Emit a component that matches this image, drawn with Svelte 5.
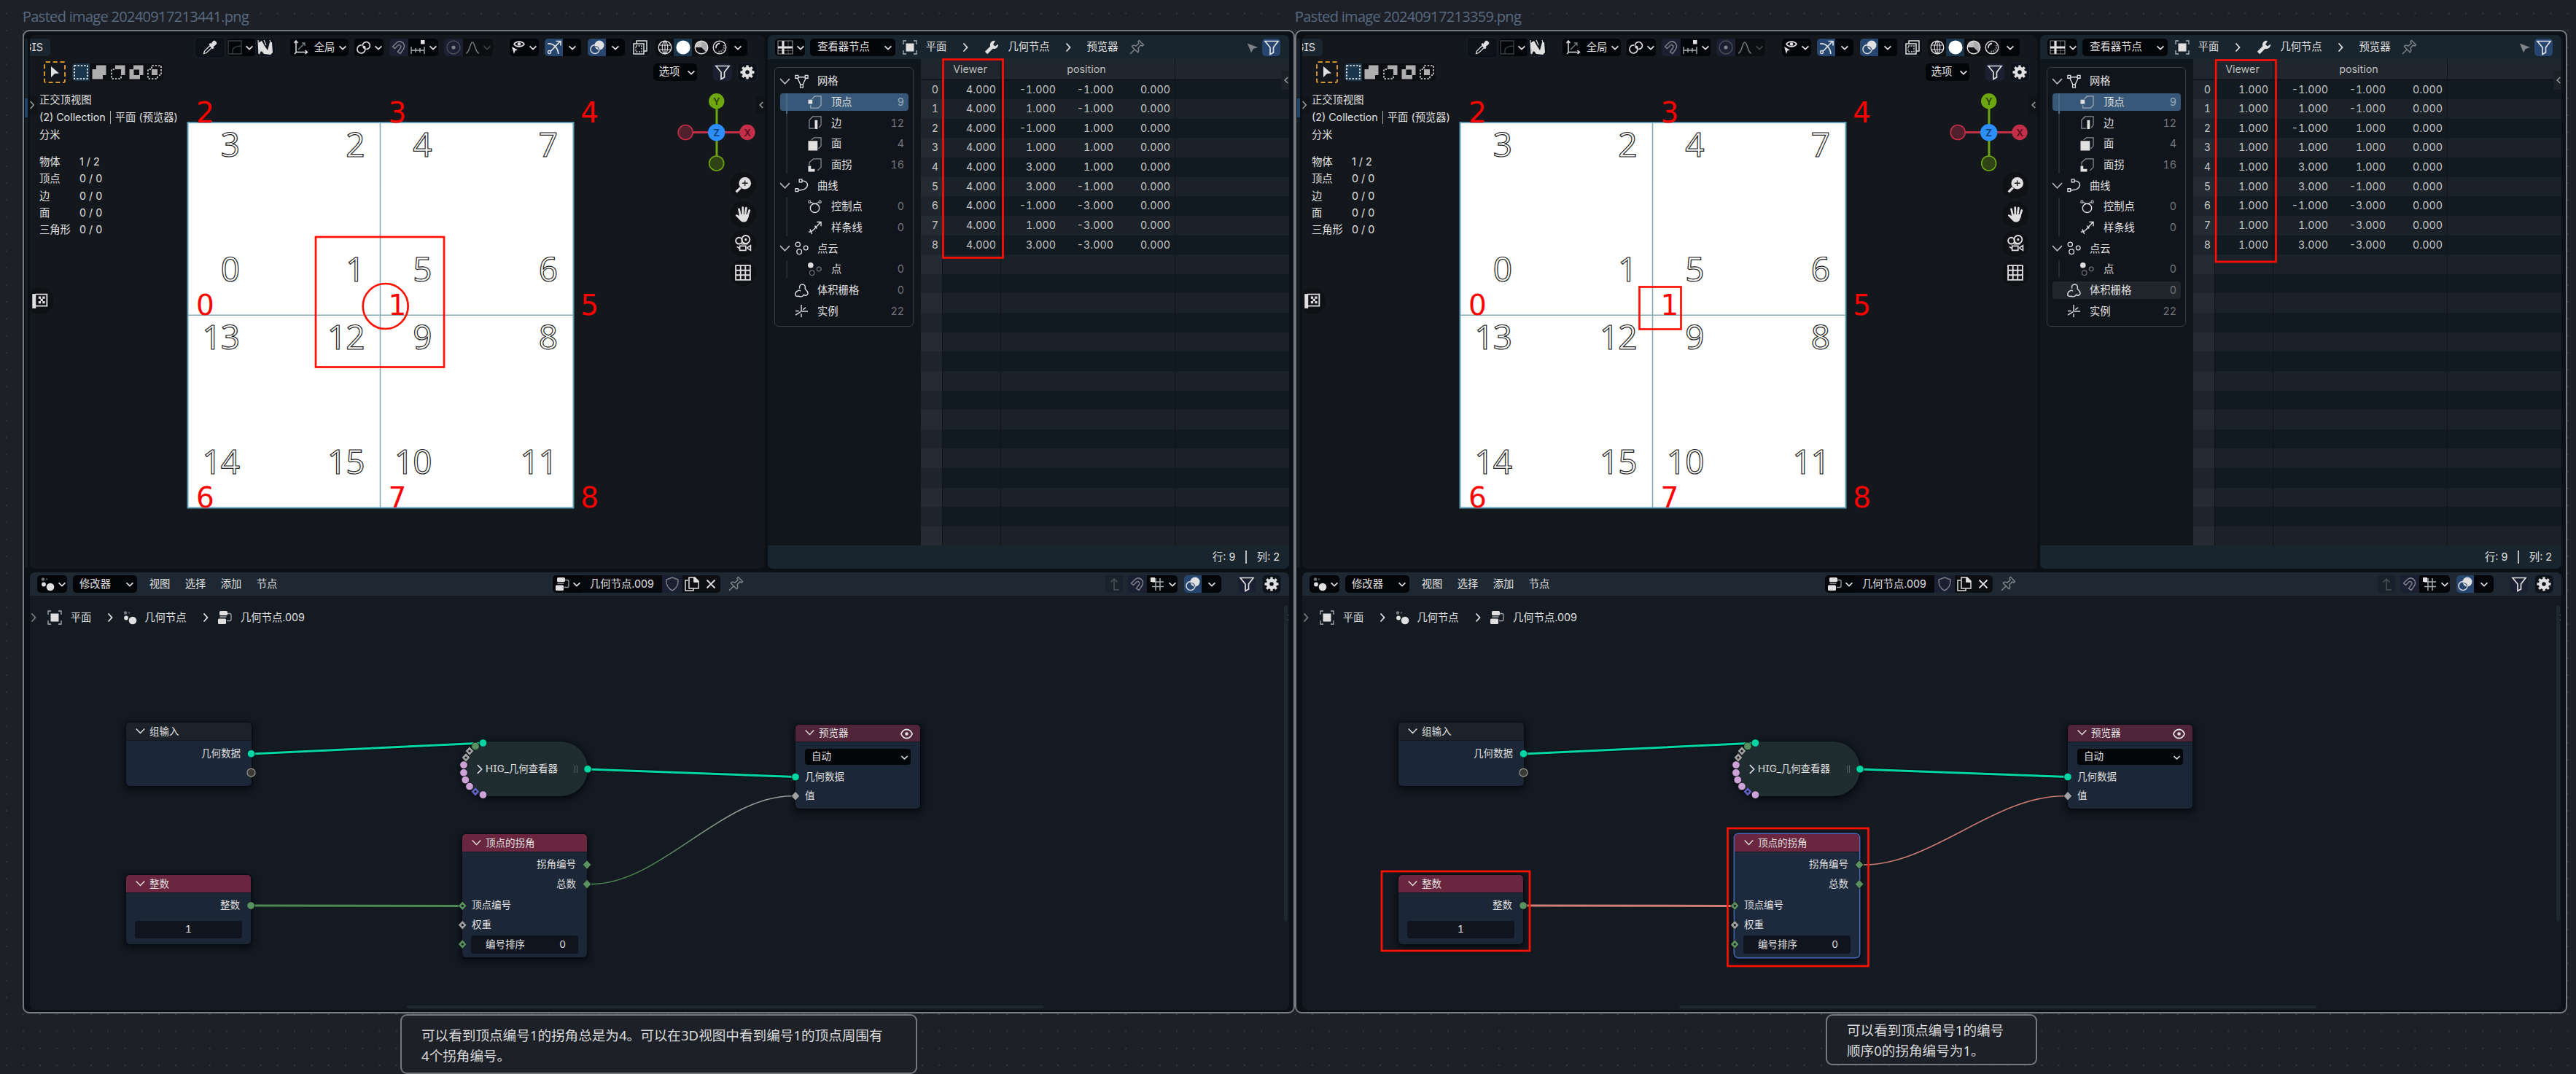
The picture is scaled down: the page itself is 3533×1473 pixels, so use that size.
<script>
  // Icon artwork on a 20x20 grid; strokes inherit the current text colour.
  const icons = {
    chev: '<path d="M4.5 8l5.5 5.200L15.500 8" stroke-width="2.200"/>',
    fold: '<path d="M3.200 6.500l6.800 7 6.800-7" stroke-width="1.700"/>',
    right: '<path d="M7.500 4.500L12.500 10l-5 5.500" stroke-width="1.8"/>',
    open: '<path d="M6.500 3.500L13 10l-6.500 6.500" stroke-width="1.8"/>',
    left: '<path d="M12.500 5.500L8 10l4.500 4.500" stroke-width="1.8"/>',
    dropper: '<path d="M1.500 18.500l1-3.500 7.500-7.500 2.700 2.700-7.700 7.300z" stroke-width="1.3"/><path d="M9 5.500l1-1 1.500 1 3-4c1.500-1.500 5.500 1.500 4 4l-4.500 3.500 1 1.500-1.500 1.500z" fill="currentColor"/>',
    falloff: '<path d="M1 1h18v18H1zM7 19v-5q1-6 12-6" stroke-width="1.4"/>',
    scribble: '<path d="M0 4l5-3 4 7 4 6 3-11 3 0 1 14-3 3-9-1-4-5-2 6z" fill="currentColor" stroke="none"/><path d="M0 0l1 19 4-12 3 9M16 0q3 6-1 14M8 0l3 7M3 2l1 14" stroke-width="1.200"/>',
    axes: '<path d="M3 1.500v15h15M.5 4L3 1l2.500 3M15.500 14l3 2.500-3 2.500M1 19l2-2" stroke-width="1.5"/><path d="M6 13l9-9M11 4h4v4" stroke-width="1.3" opacity=".55"/>',
    pivot: '<path d="M11 9.500a5.500 5.500 0 1 1-4-2.500" stroke-width="1.700"/><path d="M8.500 8.500a5 5 0 1 1 4.500 4" stroke-width="1.700"/><circle cx="10.500" cy="9.800" r="2" fill="currentColor" stroke="none"/>',
    magnet: '<path d="M1.500 9L7 3.500c6-4.500 13 2 9.500 8.500L12 18.500 8.500 16l4-5.500c1.500-2.500-1.500-5-3.500-3.500L4.500 11.500z" stroke-width="1.5"/>',
    snapinc: '<path d="M1 9v10M7 11v6M13 11v6M19 9v10M1 14h18" stroke-width="1.3" opacity=".8"/><path d="M14 0h5.500v5.500H14z" fill="currentColor" stroke="none"/>',
    prop: '<circle cx="10" cy="10" r="9" stroke-width="1.4" opacity=".5"/><circle cx="10" cy="10" r="2.600" fill="currentColor" stroke="none"/>',
    bell: '<path d="M1 18c5 0 5.500-15 9-15s4 15 9 15" stroke-width="1.6"/>',
    eyecur: '<path d="M4 5.500C7 1 15 1 18 5.500 15 10 7 10 4 5.500z" stroke-width="1.6"/><circle cx="11" cy="5.500" r="2.300" fill="currentColor" stroke="none"/><path d="M1 9l8 4.500-3.500 1L4 19z" fill="currentColor" stroke="none"/>',
    gizmo: '<path d="M1 5c9-1 14 6 15 14M5 15.500L18 2M12.500 1.500H19v6" stroke-width="1.7"/><circle cx="3.500" cy="16.500" r="2" stroke-width="1.4"/>',
    overlay: '<circle cx="7" cy="12.500" r="6" stroke-width="1.5"/><circle cx="13" cy="7" r="6.500" fill="currentColor" stroke="none"/><path d="M7.300 8.500a6 6 0 0 1 5.500 4.500" stroke="#27466f" stroke-width="1.2"/>',
    xray: '<path d="M1 5h14v14H1zM5 5V1h14v14h-4" stroke-width="1.5"/><path d="M4 8h8v8H4z" stroke-dasharray="2 1.600" stroke-width="1.3"/>',
    wire: '<circle cx="10" cy="10" r="8.800" stroke-width="1.4"/><path d="M2 7h16M2 13h16M10 1v18M10 1c-5 4-5 14 0 18M10 1c5 4 5 14 0 18" stroke-width="1.1"/>',
    solid: '<circle cx="10" cy="10" r="9.600" fill="#fff" stroke="none"/>',
    mat: '<circle cx="10" cy="10" r="8.800" stroke-width="1.4"/><path d="M10 10V1.500A8.500 8.500 0 0 0 1.500 10z" fill="currentColor" stroke="none" opacity=".85"/><path d="M10 10l6 6A8.500 8.500 0 0 0 10 1.500z" fill="currentColor" stroke="none" opacity=".75"/>',
    rend: '<circle cx="10" cy="10" r="8.800" stroke-width="1.4"/><path d="M5 11a5.500 5.500 0 0 1 5-6.500" stroke-width="1.8"/><path d="M16 7c1 5-2 9-9 9" stroke-dasharray="1.500 1.500" stroke-width="2.500" opacity=".6"/>',
    filter: '<path d="M1 1.500h18l-6.500 8.500v7L8 19.500V10z" stroke-width="1.7"/>',
    gear: '<circle cx="10" cy="10" r="5" stroke-width="4.500"/><path d="M10 .5v4M10 15.500v4M.5 10h4M15.500 10h4M3.300 3.300l2.700 2.700M14 14l2.700 2.700M3.300 16.700L6 14M14 6l2.700-2.700" stroke-width="3.400"/>',
    cursor: '<path d="M5 2l11 9.500-6 .5-5 5z" fill="currentColor" stroke="none"/>',
    aim: '<path d="M1 3l18 7-8 2.500L7.500 19z" fill="currentColor" stroke="none"/>',
    selset: '<path d="M1 1h18v18H1z" stroke-width="1.600" stroke-dasharray="2.400 2" stroke="#fff"/>',
    seladd: '<path d="M6 .5h13.500V14H15v5.500H.5V6H6z" fill="#adadad" stroke="none"/>',
    selsub: '<path d="M6 .5h13.500V14H14V6H6z" fill="#adadad" stroke="none"/><path d="M5 6H1v13h13v-4" stroke-width="1.600" stroke-dasharray="2.400 2"/>',
    selxor: '<path d="M6 .5h13.500V14H15v5.500H.5V6H6zM6.500 6.500V14H14V6.500z" fill="#adadad" stroke="none" fill-rule="evenodd"/>',
    seland: '<path d="M6 6h8v8H6z" fill="#adadad" stroke="none"/><path d="M6 5V1h13v13h-4M5 6H1v13h13v-4" stroke-width="1.600" stroke-dasharray="2.400 2"/>',
    sheet: '<path d="M0 1h20v18H0z" stroke-width="1.200" opacity=".6"/><path d="M7 1v18M0 10h20" stroke-width="3.200"/><path d="M14 1v18M0 14.500h20" stroke-width=".9" opacity=".4"/>',
    object: '<path d="M4.500 4.500h11v11h-11z" fill="currentColor" stroke="none"/><path d="M1 6V1h4M15 1h4v5M19 14v5h-4M5 19H1v-5" stroke-width="1.300" opacity=".75"/>',
    wrench: '<path d="M2.500 17.500L11 9" stroke-width="4.600"/><path d="M15 1a5.600 5.600 0 1 0 4 4.500l-4 3-3-2.500z" fill="currentColor" stroke="none"/>',
    pin: '<path d="M1 19l6.500-6.500M3 8.500l8.500 8.500M3 8.500c2-1.500 4-1.500 6-.5l4-3.500-1-2.500 1.500-1.500 6 6L18 8l-2.500-1L12 11c1 2 1 4-.5 6" stroke-width="1.500"/>',
    geo: '<circle cx="4" cy="3.500" r="2.200" fill="currentColor" stroke="none" opacity=".5"/><circle cx="9" cy="3.500" r="1.300" fill="currentColor" stroke="none" opacity=".3"/><circle cx="5" cy="10.500" r="2.900" fill="currentColor" stroke="none"/><circle cx="14" cy="14" r="5.300" fill="currentColor" stroke="none"/>',
    tree: '<rect x="3" y="1" width="11" height="6" rx="1.500" fill="currentColor" stroke="none"/><rect x="1" y="11.500" width="11" height="7.500" rx="1.500" fill="currentColor" stroke="none"/><path d="M14 4.500h3q2 0 2 2v6q0 2-2 2h-4M3.500 9h9" stroke-width="1.300" opacity=".7"/>',
    shield: '<path d="M10 1l8 3c.5 7-2 12-8 15C4 16 1.500 11 2 4z" stroke-width="1.400"/>',
    copy: '<path d="M5 5H1v14h11v-3" stroke-width="1.500"/><path d="M6 1h8l5 5v10H6zM13 1v6h6" stroke-width="1.500"/><path d="M13 1l6 6h-6z" fill="currentColor"/>',
    close: '<path d="M4.500 4.500l11 11M15.500 4.500l-11 11" stroke-width="1.800"/>',
    up: '<path d="M10 3v15h7M5.500 7.500L10 3l4.500 4.500" stroke-width="1.500"/>',
    grid: '<path d="M8 2v17M14 2v17M3 7h16M3 13.500h16" stroke-width="1.500" opacity=".75"/><path d="M1 1h6v6H1z" fill="currentColor" stroke="none"/>',
    mesh: '<path d="M4 4h12M3.500 4.500L9 16M16.500 4.500L11 16" stroke-width="1.500"/><path d="M1 1.500h4v4H1zM15 1.500h4v4h-4zM8 15h4v4H8z" fill="#10141a" stroke-width="1.400"/>',
    vert: '<path d="M6 5l4-4h9v13l-4 4H4v-4" stroke-width="1.300" opacity=".6"/><path d="M.5 6h6v6h-6z" fill="currentColor" stroke="none"/>',
    edge: '<path d="M9 18H2V6l5-5h12v12l-3 4" stroke-width="1.300" opacity=".6"/><path d="M10 6h4v13h-4z" fill="currentColor" stroke="none"/>',
    face: '<path d="M5 4l4-3h10v12l-4 4" stroke-width="1.300" opacity=".6"/><path d="M.5 5.500h13.500v14H.5z" fill="currentColor" stroke="none"/>',
    corner: '<path d="M2 10V6l6-5h11v12l-5 5" stroke-width="1.300" opacity=".6"/><path d="M.5 11h4v4.500H10v4H.5z" fill="currentColor" stroke="none"/>',
    curve: '<path d="M10 3c12 0 11 13-2 13.500H4" stroke-width="1.500"/><path d="M6.500 1h4v4h-4zM1 14.500h4v4H1z" fill="#10141a" stroke-width="1.400"/>',
    ctrl: '<circle cx="10" cy="12" r="6.500" stroke-width="1.500"/><path d="M3 3l7 3 7-3" stroke-width="1"/><path d="M1 1.500h3v3H1zM16 1.500h3v3h-3z" stroke-width="1" fill="#10141a"/>',
    spline: '<path d="M1 16c4-1 5 0 8-4L18 2M13 1.500h6v6M3 12l3 7M10 7l3 4" stroke-width="1.500"/>',
    points: '<circle cx="4.500" cy="4.500" r="3.300" stroke-width="1.400"/><circle cx="16" cy="9.500" r="3" stroke-width="1.400"/><circle cx="6.500" cy="15" r="3.500" stroke-width="1.400"/>',
    point: '<circle cx="4" cy="4" r="4" fill="currentColor" stroke="none"/><circle cx="16" cy="9.500" r="3" stroke-width="1.300" opacity=".45"/><circle cx="6" cy="15" r="3.500" stroke-width="1.300" opacity=".45"/>',
    volume: '<path d="M7 7C5-1 17-1 15 7c0 2 4 3 4 7 0 3-4 4-6 2-1 2-4 4-7 2-2 1-6 0-5-3 0-4 3-4 4-5M5 10c2-1 3 0 3 1" stroke-width="1.500"/>',
    inst: '<path d="M9.500 10.500V1M10 10.500h9M9 11l-8 5M1 10h5M9.500 14v5M12 8l4-3" stroke-width="1.500"/>',
    zoom: '<circle cx="12.500" cy="7.500" r="7.500" fill="currentColor" stroke="none"/><path d="M7 13l-5.500 5.500" stroke-width="3"/><path d="M12.500 4v7M9 7.500h7" stroke="#14171c" stroke-width="1.200"/>',
    hand: '<path d="M6.500 10L5 3.500M9.800 9V1.500M13 9l1-7M16 11l2-6" stroke-width="2.500" stroke-linecap="round"/><path d="M5 10h12c1 3-1 5-1.500 6.500-1 4-7 4-9 1L.8 11.500c0-2 2-1.500 4.500.5z" fill="currentColor" stroke="none"/>',
    camera: '<circle cx="5" cy="6.500" r="4" stroke-width="1.700"/><circle cx="13.500" cy="5" r="5" stroke-width="1.700"/><circle cx="13.500" cy="5" r="1" fill="currentColor"/><path d="M6 13h7.500v5.500H6zM19.500 12.500l-4 2.500v1l4 2.500zM2.500 14l3 2M8 10.500h8" stroke-width="1.500"/>',
    ortho: '<path d="M1 1h18v18H1zM7 1v18M13 1v18M1 7h18M1 13h18" stroke-width="1.700"/>',
    eye: '<path d="M1 10c4-9.500 14-9.500 18 0-4 9.500-14 9.500-18 0z" stroke-width="2.200"/><circle cx="10" cy="10" r="2.700" fill="currentColor" stroke="none"/>',
    texture: '<path d="M2.500 1v18" stroke-width="4.500"/><path d="M4 1.500h14.500V16H4" stroke-width="1.700"/><path d="M8 4h3v3H8zM13 4h3v3h-3zM10.500 7h3v3h-3zM8 10h3v3H8zM13 10h3v3h-3z" fill="currentColor" stroke="none"/>'
  };

  // Toolbar entries: gap before, width, style classes, and either an icon or a label.
  const viewTools = [
    { g: 0, w: 28, c: 'tab clip', t: 'GIS' },
    { g: 199, w: 40, c: 'ring tall', i: 'dropper' },
    { g: 3, w: 22, c: 'blk l faint', i: 'falloff' },
    { g: 0, w: 18, c: 'blk r', i: 'chev' },
    { g: 0, w: 26, c: 'ring', i: 'scribble' },
    { g: 21, w: 30, c: 'blk l', i: 'axes' },
    { g: 0, w: 34, c: 'blk', t: '全局' },
    { g: 0, w: 16, c: 'blk r', i: 'chev' },
    { g: 8, w: 25, c: 'blk l', i: 'pivot' },
    { g: 0, w: 15, c: 'blk r', i: 'chev' },
    { g: 8, w: 26, c: 'navy l dim', i: 'magnet' },
    { g: 0, w: 26, c: 'blk', i: 'snapinc' },
    { g: 0, w: 15, c: 'blk r', i: 'chev' },
    { g: 8, w: 26, c: 'navy l dim', i: 'prop' },
    { g: 0, w: 25, c: 'soot dim', i: 'bell' },
    { g: 0, w: 16, c: 'soot r faint', i: 'chev' },
    { g: 23, w: 24, c: 'blk l', i: 'eyecur' },
    { g: 0, w: 16, c: 'blk r', i: 'chev' },
    { g: 8, w: 25, c: 'blue l', i: 'gizmo' },
    { g: 0, w: 25, c: 'blk r', i: 'chev' },
    { g: 9, w: 25, c: 'blue l', i: 'overlay' },
    { g: 0, w: 26, c: 'blk r', i: 'chev' },
    { g: 8, w: 26, c: 'ring', i: 'xray' },
    { g: 8, w: 25, c: 'soot l', i: 'wire' },
    { g: 0, w: 25, c: 'teal', i: 'solid' },
    { g: 0, w: 25, c: 'soot', i: 'mat' },
    { g: 0, w: 25, c: 'soot', i: 'rend' },
    { g: 0, w: 26, c: 'blk r', i: 'chev' }
  ];
  const selectTools = [
    { g: 19, w: 30, c: 'dash', i: 'cursor' },
    { g: 9, w: 24, c: 'teal l', i: 'selset' },
    { g: 0, w: 26, c: 'soot', i: 'seladd' },
    { g: 0, w: 25, c: 'soot', i: 'selsub' },
    { g: 0, w: 25, c: 'soot', i: 'selxor' },
    { g: 0, w: 25, c: 'soot r', i: 'seland' },
    { g: 672, w: 44, c: 'blk l', t: '选项' },
    { g: 0, w: 16, c: 'blk r', i: 'chev' },
    { g: 22, w: 26, c: 'navy l r', i: 'filter' },
    { g: 8, w: 26, c: 'ring', i: 'gear' }
  ];
  const sheetTools = [
    { g: 10, w: 28, c: 'blk l', i: 'sheet' },
    { g: 0, w: 13, c: 'blk r', i: 'chev' },
    { g: 7, w: 92, c: 'blk l', t: '查看器节点' },
    { g: 0, w: 25, c: 'blk r endchev', i: 'chev' },
    { g: 8, w: 24, c: '', i: 'object' },
    { g: 6, w: 36, c: '', t: '平面' },
    { g: 12, w: 20, c: '', i: 'right' },
    { g: 14, w: 24, c: '', i: 'wrench' },
    { g: 10, w: 58, c: '', t: '几何节点' },
    { g: 15, w: 20, c: '', i: 'right' },
    { g: 14, w: 46, c: '', t: '预览器' },
    { g: 12, w: 24, c: 'dim', i: 'pin' },
    { g: 134, w: 26, c: 'dim small', i: 'aim' },
    { g: 0, w: 25, c: 'blue l r', i: 'filter' }
  ];
  const nodeTools = [
    { g: 10, w: 27, c: 'blk l', i: 'geo' },
    { g: 0, w: 14, c: 'blk r', i: 'chev' },
    { g: 8, w: 61, c: 'blk l', t: '修改器' },
    { g: 0, w: 27, c: 'blk r endchev', i: 'chev' },
    { g: 9, w: 44, c: '', t: '视图' },
    { g: 5, w: 44, c: '', t: '选择' },
    { g: 5, w: 44, c: '', t: '添加' },
    { g: 5, w: 44, c: '', t: '节点' },
    { g: 370, w: 26, c: 'blk l', i: 'tree' },
    { g: 0, w: 14, c: 'blk', i: 'chev' },
    { g: 0, w: 110, c: 'ink', t: '几何节点.009' },
    { g: 0, w: 28, c: 'navy dim', i: 'shield' },
    { g: 0, w: 26, c: 'soot', i: 'copy' },
    { g: 0, w: 26, c: 'soot r', i: 'close' },
    { g: 8, w: 26, c: 'dim', i: 'pin' },
    { g: 494, w: 24, c: 'hush faint', i: 'up' },
    { g: 7, w: 26, c: 'navy l dim', i: 'magnet' },
    { g: 0, w: 27, c: 'blk', i: 'grid' },
    { g: 0, w: 15, c: 'blk r', i: 'chev' },
    { g: 9, w: 24, c: 'blue l', i: 'overlay' },
    { g: 0, w: 27, c: 'blk r', i: 'chev' },
    { g: 23, w: 24, c: 'navy l r', i: 'filter' },
    { g: 10, w: 24, c: 'ring', i: 'gear' }
  ];
  const crumbs = [
    { g: 0, w: 10, c: 'dim', i: 'right' },
    { g: 12, w: 24, c: '', i: 'object' },
    { g: 5, w: 38, c: '', t: '平面' },
    { g: 6, w: 30, c: '', i: 'right' },
    { g: 0, w: 24, c: '', i: 'geo' },
    { g: 3, w: 68, c: '', t: '几何节点' },
    { g: 11, w: 20, c: '', i: 'right' },
    { g: 4, w: 24, c: '', i: 'tree' },
    { g: 4, w: 100, c: '', t: '几何节点.009' }
  ];

  const domains = [
    { n: '网格', i: 'mesh', head: true },
    { n: '顶点', i: 'vert', child: true, v: 9, sel: true },
    { n: '边', i: 'edge', child: true, v: 12 },
    { n: '面', i: 'face', child: true, v: 4 },
    { n: '面拐', i: 'corner', child: true, v: 16, end: true },
    { n: '曲线', i: 'curve', head: true },
    { n: '控制点', i: 'ctrl', child: true, v: 0 },
    { n: '样条线', i: 'spline', child: true, v: 0, end: true },
    { n: '点云', i: 'points', head: true },
    { n: '点', i: 'point', child: true, v: 0, end: true },
    { n: '体积栅格', i: 'volume', v: 0, vol: true },
    { n: '实例', i: 'inst', v: 22 }
  ];

  const positions = [[-1, -1], [1, -1], [-1, 1], [1, 1], [3, 1], [3, -1], [-1, -3], [1, -3], [3, -3]];
  const tableRows = Array.from({ length: 24 }, (_, k) => positions[k] ?? null);

  const stats = [['物体', '1 / 2'], ['顶点', '0 / 0'], ['边', '0 / 0'], ['面', '0 / 0'], ['三角形', '0 / 0']];

  const cornerCols = [328, 499.500, 591.500, 764];
  const cornerGrid = [
    { y: 214.5, v: [3, 2, 4, 7] },
    { y: 386.3, v: [0, 1, 5, 6] },
    { y: 478.5, v: [13, 12, 9, 8] },
    { y: 650, v: [14, 15, 10, 11] }
  ];
  const vertGrid = [
    { y: 168, v: [2, 3, 4] },
    { y: 432.3, v: [0, 1, 5] },
    { y: 696, v: [6, 7, 8] }
  ];
  const vertCols = [281.3, 545, 808.7];

  const nodes = [
    { x: 173, y: 991, w: 172, h: 87, hh: 25, c: 'plain', t: '组输入', rows: [{ m: 5, h: 26, a: 'out', t: '几何数据' }] },
    { x: 173, y: 1200, w: 171, h: 95, hh: 25, c: 'red', t: '整数', rows: [{ m: 4, h: 26, a: 'out', t: '整数' }, { m: 8, h: 24, a: 'field mid', t: '1' }] },
    {
      x: 634, y: 1144, w: 171, h: 169, hh: 25, c: 'red', t: '顶点的拐角', pick: true,
      rows: [
        { m: 4, h: 26, a: 'out', t: '拐角编号' }, { m: 0, h: 27, a: 'out', t: '总数' },
        { m: 3, h: 26, a: 'in', t: '顶点编号' }, { m: 0, h: 27, a: 'in', t: '权重' },
        { m: 1, h: 25, a: 'field pair', t: '编号排序', v: '0' }
      ]
    },
    {
      x: 1091, y: 994, w: 171, h: 115, hh: 24, c: 'wine', t: '预览器', eye: true,
      rows: [{ m: 9, h: 22, a: 'select', t: '自动' }, { m: 4, h: 26, a: 'in', t: '几何数据' }, { m: 0, h: 26, a: 'in', t: '值' }]
    }
  ];

  const T = '#00d6a3', G = '#5a9160', P = '#cda2d8', S = '#a1a1a1', B = '#6363c7';
  const rounds = [
    [344.5, 1033.7, T], [662.5, 1019, T], [652, 1023.4, G], [636, 1049, P], [636, 1059.7, P], [638.3, 1069.6, P],
    [644, 1078.5, P], [662.5, 1090, P], [806, 1054.8, T], [344, 1242, G], [1091, 1065.5, T]
  ];
  const diamonds = [
    [644, 1030, S, 1], [639, 1039, S, 1], [652, 1085.7, B, 1], [805, 1186, G, 0], [805, 1212.6, G, 0],
    [634.3, 1242.3, G, 1], [634.3, 1268.7, S, 1], [634.3, 1295, G, 1], [1091, 1091.7, S, 0]
  ];

  const boards = [
    {
      id: 'a', title: 'Pasted image 20240917213441.png', value: '4.000',
      note: ['可以看到顶点编号1的拐角总是为4。可以在3D视图中看到编号1的顶点周围有', '4个拐角编号。'],
      marks: [[433, 325, 176, 178.5], [1293.500, 81.500, 82, 272]], ring: true
    },
    {
      id: 'b', title: 'Pasted image 20240917213359.png', value: '1.000', second: true,
      note: ['可以看到顶点编号1的编号', '顺序0的拐角编号为1。'],
      marks: [[503.5, 393.5, 57, 58], [1294, 82.500, 82.500, 276.500], [150, 1195, 203, 109], [624.500, 1136, 193, 189]]
    }
  ];
</script>

{#snippet icon(name)}
  <svg class="ic" viewBox="0 0 20 20">{@html icons[name]}</svg>
{/snippet}

{#snippet bar(items)}
  {#each items as it}
    <div class="seg {it.c}" class:txt={it.t} class:arrow={it.i === 'chev'} style="width:{it.w}px;margin-left:{it.g}px">
      {#if it.i}{@render icon(it.i)}{:else}<span>{it.t}</span>{/if}
    </div>
  {/each}
{/snippet}

<main>
  {#each boards as b}
    <section class="board" class:second={b.second}>
      <h2>{b.title}</h2>
      <div class="card">
        <div class="sliver"></div>
        <div class="top">
          <div class="viewport">
            <div class="bar vbar">{@render bar(viewTools)}</div>
            <div class="bar sbar">{@render bar(selectTools)}</div>
            <div class="info">
              <p>正交顶视图</p>
              <p>(2) Collection <i></i> 平面 (预览器)</p>
              <p>分米</p>
              <dl>
                {#each stats as s}<dt>{s[0]}</dt><dd>{s[1]}</dd>{/each}
              </dl>
            </div>
            <svg class="scene" viewBox="41 48 1008 732">
              <rect x="257.500" y="168" width="529" height="528.500" fill="#fff" />
              <path d="M521.500 168v528M257.500 432.300h529" stroke="#86abb6" stroke-width="1.6" />
              <rect x="257.500" y="168" width="529" height="528.500" fill="none" stroke="#5d9db5" stroke-width="2" />
              {#each cornerGrid as row}
                {#each row.v as n, k}
                  <text class="outline" x={cornerCols[k]} y={row.y} text-anchor="end">{n}</text>
                {/each}
              {/each}
              {#each vertGrid as row}
                {#each row.v as n, k}
                  <text class="vert" x={vertCols[k]} y={row.y} text-anchor="middle">{n}</text>
                {/each}
              {/each}
              <path d="M983 139v85" stroke="#6ea60f" stroke-width="3" />
              <path d="M940 181.500h85" stroke="#c32f48" stroke-width="3" />
              <circle cx="982.700" cy="138.700" r="10.700" fill="#6ea60f" />
              <circle cx="982.700" cy="224" r="10" fill="#2f4317" stroke="#6ea60f" stroke-width="1.600" />
              <circle cx="940.200" cy="181.500" r="10" fill="#50202e" stroke="#c32f48" stroke-width="1.600" />
              <circle cx="1025" cy="181.500" r="10.700" fill="#c32f48" />
              <circle cx="982.700" cy="181.700" r="11.700" fill="#2b8fff" />
              <text class="axis" x="982.700" y="143.500" fill="#26400a">Y</text>
              <text class="axis" x="1025" y="186.500" fill="#5b0f1c">X</text>
              <text class="axis" x="982.700" y="186.700" fill="#103c6b">Z</text>
            </svg>
            <div class="nav">
              {#each ['zoom', 'hand', 'camera', 'ortho'] as n}<div class="disc">{@render icon(n)}</div>{/each}
            </div>
            <div class="disc tex">{@render icon('texture')}</div>
            <div class="flap fl">{@render icon('right')}</div>
            <div class="flap fr">{@render icon('left')}</div>
          </div>

          <div class="sheet">
            <div class="bar hbar">{@render bar(sheetTools)}</div>
            <div class="body">
              <div class="side">
                <div class="tree">
                  {#each domains as d}
                    <div class="row" class:sel={d.sel} class:child={d.child} class:end={d.end} class:hover={d.vol && b.second}>
                      <span class="tog">{#if d.head}{@render icon('fold')}{/if}</span>
                      {@render icon(d.i)}
                      <span class="name">{d.n}</span>
                      <span class="num">{d.v ?? ''}</span>
                    </div>
                  {/each}
                </div>
              </div>
              <div class="table">
                <div class="tr th"><b class="c0"></b><b class="c1">Viewer</b><b class="c5">position</b><b class="rest"></b></div>
                {#each tableRows as r, k}
                  <div class="tr">
                    <span class="c0">{r ? k : ''}</span>
                    <span class="c1">{r ? b.value : ''}</span>
                    <span class="c2">{r ? r[0].toFixed(3) : ''}</span>
                    <span class="c3">{r ? r[1].toFixed(3) : ''}</span>
                    <span class="c4">{r ? '0.000' : ''}</span>
                    <span class="rest"></span>
                  </div>
                {/each}
              </div>
            </div>
            <div class="status"><span>行: 9</span><i></i><span>列: 2</span></div>
            <div class="flap fs">{@render icon('left')}</div>
          </div>
        </div>

        <div class="editor">
          <div class="bar nbar">{@render bar(nodeTools)}</div>
          <div class="bar cbar">{@render bar(crumbs)}</div>
          <div class="flap fe">{@render icon('left')}</div>
          <div class="vscroll"></div>
          <div class="hscroll"></div>
          {#each nodes as n}
            <div class="node {n.c}" class:picked={n.pick && b.second} style="left:{n.x - 41}px;top:{n.y - 785}px;width:{n.w}px;height:{n.h}px">
              <header style="height:{n.hh}px">{@render icon('fold')}<span>{n.t}</span>{#if n.eye}<em>{@render icon('eye')}</em>{/if}</header>
              {#each n.rows as r}
                <div class="line {r.a}" style="height:{r.h}px;margin-top:{r.m}px">
                  <span>{r.t}</span>{#if r.v}<span>{r.v}</span>{/if}{#if r.a === 'select'}{@render icon('chev')}{/if}
                </div>
              {/each}
            </div>
          {/each}
          <div class="pill">{@render icon('open')}<span>HIG_几何查看器</span><i></i></div>
          <svg class="wires" viewBox="41 785 1727 600">
            <defs>
              <linearGradient id="fade-{b.id}" gradientUnits="userSpaceOnUse" x1="805" y1="0" x2="1091" y2="0">
                <stop offset=".35" stop-color="#4d8250" /><stop offset=".75" stop-color="#9a9a9a" />
              </linearGradient>
            </defs>
            <g fill="none" stroke="#0a1014">
              <path d="M344.500 1034L662.500 1019M806 1055L1091 1065.500" stroke-width="5.500" />
              <path d="M344.500 1034L662.500 1019M806 1055L1091 1065.500" stroke={T} stroke-width="3" />
              {#if b.second}
                <path d="M349 1242L630 1242.500" stroke="#d17f76" stroke-width="3" />
                <path d="M811 1186C905 1186 990 1091.700 1086 1091.700" stroke="#c97a72" stroke-width="1.600" />
              {:else}
                <path d="M349 1242L630 1242.500" stroke="#4d8a52" stroke-width="3" />
                <path d="M811 1212.600C905 1212.600 990 1091.700 1086 1091.700" stroke="url(#fade-{b.id})" stroke-width="1.600" />
              {/if}
            </g>
            <circle cx="344.500" cy="1059.700" r="5.500" fill="#3b3936" stroke="#8d8a85" stroke-width="1.400" />
            {#each rounds as s}<circle cx={s[0]} cy={s[1]} r="5.300" fill={s[2]} stroke="#0d1216" stroke-width=".8" />{/each}
            {#each diamonds as s}
              <path d="M{s[0]} {s[1] - 6.3}l5.800 6.300l-5.800 6.300l-5.800 -6.300z" fill={s[2]} stroke="#0d1216" stroke-width=".8" />
              {#if s[3]}<circle cx={s[0]} cy={s[1]} r="1.600" fill="#12181e" />{/if}
            {/each}
          </svg>
        </div>

        <svg class="marks" viewBox="31 41 1745 1349">
          {#each b.marks as m}<rect x={m[0]} y={m[1]} width={m[2]} height={m[3]} />{/each}
          {#if b.ring}<circle cx="528.700" cy="420" r="31" />{/if}
        </svg>
      </div>
      <div class="note">{#each b.note as line}<p>{line}</p>{/each}</div>
    </section>
  {/each}
</main>

<style>
  :global(body) { background: #1d2027; overflow: hidden; }
  main {
    display: flex; box-sizing: border-box; width: 3533px; height: 1473px; padding-left: 31px; overflow: hidden;
    color: #e0e0e0; font: 14.3px/1 Inter, "Noto Sans CJK SC", sans-serif; font-feature-settings: "cv08";
    background: radial-gradient(circle, #343940 0 1.100px, transparent 1.400px) -3.100px 6.900px / 23.272px 23.272px #1d2027;
  }
  h2, p, dl, dd { margin: 0; }
  span, p { white-space: nowrap; }
  .board { width: 1745px; flex: none; }
  h2 {
    height: 41px; box-sizing: border-box; padding-top: 3px; font: 400 20px/40px "Open Sans", sans-serif;
    color: #576a80; letter-spacing: -.680px;
  }
  .card {
    position: relative; box-sizing: border-box; height: 1349px; border: 2px solid #777a7c; border-radius: 9px;
    background: #0b1014; padding: 5px 0 0 8px;
  }
  .sliver { position: absolute; left: 1px; top: 10px; width: 4px; height: 725px; background: linear-gradient(#16212b 0 82px, #1d4567 82px 108px, #141c24 108px); }
  .ic { width: 20px; height: 20px; flex: none; fill: none; stroke: currentColor; overflow: visible; }
  .top { display: flex; gap: 4px; height: 732px; }
  .viewport { position: relative; width: 1008px; height: 732px; background: #14171c; border-radius: 7px; overflow: hidden; }
  .bar { display: flex; align-items: center; position: relative; z-index: 1; }
  .vbar { height: 34px; }
  .sbar { height: 33px; }
  .seg { display: flex; align-items: center; justify-content: center; height: 24px; flex: none; box-sizing: border-box; }
  .seg.arrow .ic { width: 16px; height: 16px; margin: 0 -3px; }
  .seg.small .ic { width: 16px; height: 16px; }
  .tab { background: #1c2631; border-radius: 0 5px 5px 0; }
  .clip { overflow: hidden; justify-content: flex-end; padding-right: 10px; }
  .blk { background: #030509; }
  .soot { background: #0d0e11; }
  .ink { background: #07090e; }
  .hush { background: #18222b; border-radius: 5px; }
  .navy { background: #1a2031; }
  .blue { background: #27466f; }
  .teal { background: #19364d; }
  .l { border-top-left-radius: 5px; border-bottom-left-radius: 5px; }
  .r { border-top-right-radius: 5px; border-bottom-right-radius: 5px; }
  .ring { background: #0d1118; box-shadow: 0 0 0 1px #182130; border-radius: 5px; }
  .tall { height: 27px; }
  .dim .ic { opacity: .5; }
  .faint .ic { opacity: .25; }
  .dash { height: 30px; border: 2px dashed #d4922b; border-radius: 3px; }
  .seg.endchev { justify-content: flex-end; padding-right: 5px; }
  .info { padding: 9.500px 0 0 13px; font-size: 14.3px; }
  .info p { height: 24px; line-height: 24px; }
  .info i { display: inline-block; width: 1px; height: 18px; margin: 0 2px; background: #aaa; vertical-align: -4px; }
  dl { display: grid; grid-template-columns: 55px 60px; grid-auto-rows: 23.3px; padding-top: 13.500px; line-height: 23px; }
  .scene { position: absolute; inset: 0; width: 1008px; height: 732px; }
  .outline { font: 400 46px "Open Sans", sans-serif; letter-spacing: -1px; fill: #fff; stroke: #222; stroke-width: 1.200px; }
  .vert { font: 400 39px "DejaVu Sans", sans-serif; fill: #f00; }
  .axis { font: 600 13.500px Inter, sans-serif; text-anchor: middle; }
  .nav { position: absolute; left: 960px; top: 188px; display: flex; flex-direction: column; gap: 4px; }
  .disc { width: 36px; height: 36px; border-radius: 50%; background: #0f1114; display: flex; align-items: center; justify-content: center; }
  .disc .ic { width: 22px; height: 22px; }
  .tex { position: absolute; left: -4px; top: 347px; }
  .flap { position: absolute; display: flex; width: 14px; height: 26px; align-items: center; justify-content: center; color: #999; background: #101317; }
  .flap .ic { width: 18px; height: 18px; }
  .fl { left: -4px; top: 83px; }
  .fr { left: 996px; top: 83px; }
  .fs { left: 704px; top: 49px; background: #1b2127; }
  .fe { left: 1716px; top: 49px; background: none; }
  .sheet { position: relative; display: flex; flex-direction: column; width: 715px; height: 732px; border-radius: 7px; overflow: hidden; background: #0f161c; }
  .hbar { height: 33px; background: #18242e; }
  .body { display: flex; height: 666.500px; overflow: hidden; }
  .side { width: 210px; padding: 11px 0 0 9px; box-sizing: border-box; }
  .tree { width: 191px; height: 356px; box-sizing: border-box; border: 1.500px solid #3b3c3f; border-radius: 6px; background: #10141b; padding: 6.500px 6px 0 7px; }
  .row { display: flex; align-items: center; height: 24px; margin-bottom: 4.680px; padding-right: 6px; border-radius: 4px; position: relative; }
  .row .ic { width: 19px; height: 19px; }
  .row.sel { background: #375878; }
  .row.hover { background: #21252c; }
  .tog { width: 20px; display: flex; color: #b8b8b8; }
  .tog .ic { margin-left: -3px; }
  .child .tog { width: 30px; margin: -1px 0 -5.700px 8px; height: 30px; border-left: 2px solid #272b31; box-sizing: border-box; }
  .child.end .tog { height: 24px; margin-bottom: 0; }
  .sel .tog { border-color: #4d6a87; }
  .name { margin-left: 12px; }
  .child .name { margin-left: 13px; }
  .num { margin-left: auto; color: #73767a; font-variant-numeric: tabular-nums; }
  .sel .num { color: #9aa9b8; }
  .table { width: 505px; font-variant-numeric: tabular-nums; font-feature-settings: "tnum", "ss04"; color: #c6c6c6; }
  .tr { display: flex; height: 26.640px; line-height: 26.640px; background: #121a21; text-align: right; }
  .tr:nth-child(odd) { background: #1a2128; }
  .tr.th { height: 28.500px; line-height: 28px; background: #20262d; box-shadow: inset 0 -1.500px #0b1117; color: #bdbdbd; text-align: center; }
  .tr b { font-weight: 400; }
  .tr > * { box-sizing: border-box; height: 100%; flex: none; }
  .c0 { width: 30px; padding-right: 5px; background: #1d242b; border-right: 1px solid #0d141a; }
  .tr:nth-child(odd) .c0 { background: #242b32; }
  .tr.th .c0 { background: #20262d; box-shadow: inset 0 -1.500px #0b1117; }
  .c1 { width: 80px; padding-right: 6px; border-right: 1px solid #0d141a; }
  .th .c1 { padding-right: 4px; }
  .c2 { width: 80px; padding-right: 5px; }
  .c3 { width: 79px; padding-right: 5px; }
  .c4 { width: 80px; padding-right: 6px; border-right: 1px solid #0d141a; }
  .c5 { width: 239px; padding-right: 4px; border-right: 1px solid #0d141a; }
  .status { display: flex; align-items: center; justify-content: flex-end; height: 32.500px; background: #18242e; padding-right: 13px; }
  .status i { width: 1.500px; height: 18px; margin: 0 14px; background: #bbb; }
  .editor { position: relative; width: 1727px; height: 600px; margin-top: 5px; border-radius: 7px; background: #131a21; }
  .nbar { height: 32px; background: #1d2832; border-radius: 7px 7px 0 0; }
  .cbar { height: 60px; }
  .vscroll { position: absolute; left: 1720px; top: 45px; width: 5px; height: 434px; border-radius: 3px; background: #1d2831; }
  .hscroll { position: absolute; left: 517px; top: 594px; width: 874px; height: 4px; border-radius: 2px; background: #1d2831; }
  .node { position: absolute; box-sizing: border-box; border-radius: 5px; background: #1b2636; box-shadow: 0 3px 9px 2px #070b10, 0 0 0 1px #0c1117; font-size: 13.500px; }
  .node.picked { background: #1d2a3e; box-shadow: 0 0 0 1.500px #4566b4, 0 3px 9px 2px #070b10; }
  .node header { display: flex; align-items: center; padding-left: 11px; box-sizing: border-box; border-radius: 5px 5px 0 0; background: #1c222a; box-shadow: inset 0 -1px #131821; }
  .node header > .ic { width: 17px; height: 17px; margin-top: -3px; }
  .node header span { margin-left: 4px; }
  .red header { background: #6a263e; }
  .wine header { background: #512539; }
  .node em { margin-left: auto; margin-right: 10px; display: flex; }
  .node em .ic { width: 17px; height: 17px; }
  .line { display: flex; align-items: center; box-sizing: border-box; }
  .out { justify-content: flex-end; padding-right: 15px; }
  .in { padding-left: 13px; }
  .field { margin-left: 12px; margin-right: 12px; border-radius: 4px; background: #10141f; font-feature-settings: "tnum", "ss04"; }
  .mid { justify-content: center; }
  .pair { justify-content: space-between; padding: 0 17px 0 20px; }
  .select { margin-left: 13px; margin-right: 13px; border-radius: 4px; background: #030509; padding: 0 1px 0 9px; justify-content: space-between; }
  .select .ic { width: 15px; height: 15px; }
  .pill {
    position: absolute; left: 593px; top: 232px; width: 172px; height: 75px; box-sizing: border-box; border-radius: 37px; display: flex; align-items: center;
    padding-left: 15px; background: #1f2d30; box-shadow: 0 3px 9px 2px #070b10, 0 0 0 1px #0c1416; font-size: 13.500px;
  }
  .pill .ic { width: 18px; height: 18px; }
  .pill span { margin-left: -1px; letter-spacing: -.1px; }
  .pill i { width: 2px; height: 10px; margin-left: 23px; border: solid #56625f; border-width: 0 1.500px; }
  .wires { position: absolute; left: 0; top: 0; width: 1727px; height: 600px; }
  .marks { position: absolute; left: -2px; top: -2px; width: 1745px; height: 1349px; fill: none; stroke: #ff1000; stroke-width: 2.700px; z-index: 3; }
  .note {
    box-sizing: border-box; margin: 1px 0 0 518px; width: 709px; height: 82px; border: 2px solid #75787b; border-radius: 9px; background: #1d2027;
    padding: 13px 0 0 27px; font: 400 18.600px/28px "Noto Sans", "Noto Sans CJK SC", sans-serif; color: #dadada;
  }
  .second .note { margin-left: 728px; width: 290px; height: 70px; padding-top: 6px; }
</style>
